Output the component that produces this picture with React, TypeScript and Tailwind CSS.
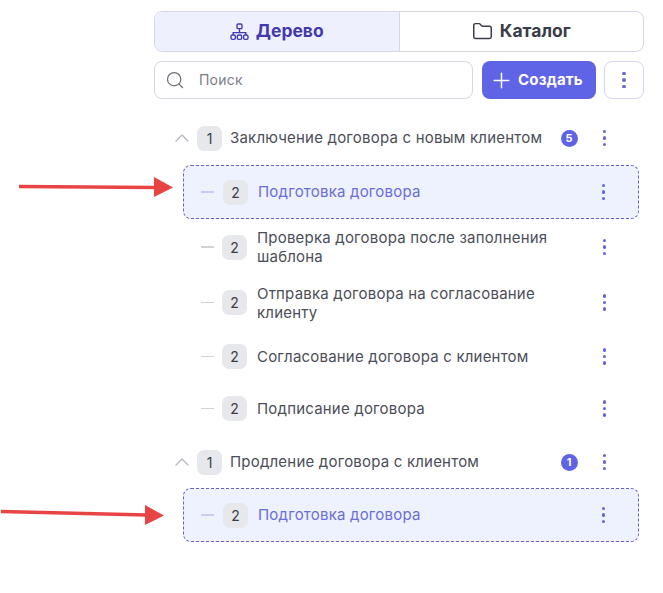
import { ChevronUp, Folder, Plus, Search } from 'lucide-react';

function TreeIcon() {
	return (
		<svg width="19" height="18" viewBox="0 0 19 18" fill="none" stroke="currentColor" strokeWidth="1.4">
			<rect x="7" y="1" width="5" height="4.6" rx="1.2" />
			<path d="M9.5 5.6V10M3.2 12V9.6H15.8V12" />
			<rect x="1" y="12" width="4.4" height="4.4" rx="1.4" />
			<rect x="7.3" y="12" width="4.4" height="4.4" rx="1.4" />
			<rect x="13.6" y="12" width="4.4" height="4.4" rx="1.4" />
		</svg>
	);
}

function Kebab({ className }: { className: string }) {
	return (
		<div className={`flex flex-col items-center gap-[3px] ${className}`}>
			<span className="w-[3.5px] h-[3.5px] rounded-full bg-[#6366d8]" />
			<span className="w-[3.5px] h-[3.5px] rounded-full bg-[#6366d8]" />
			<span className="w-[3.5px] h-[3.5px] rounded-full bg-[#6366d8]" />
		</div>
	);
}

function Badge({ n }: { n: number }) {
	return (
		<div className="w-[25px] h-[25px] shrink-0 rounded-[7px] bg-[#e7e8ec] flex items-center justify-center text-[14px] text-[#3a3d48]">
			{n}
		</div>
	);
}

function GroupRow({ title, count }: { title: string; count: number }) {
	return (
		<div className="h-[30px] flex items-center">
			<ChevronUp className="w-[24px] h-[24px] ml-[16px] mr-[3px] text-[#b4b6bd]" strokeWidth={1.2} />
			<Badge n={1} />
			<span className="ml-[8px] text-[15px] tracking-[0.2px] text-[#4b4e58] whitespace-nowrap">{title}</span>
			<div className="ml-auto w-[17px] h-[17px] mr-[25px] rounded-full bg-[#5f63e6] text-white text-[11px] font-bold flex items-center justify-center">
				{count}
			</div>
			<Kebab className="mr-[38px]" />
		</div>
	);
}

function ChildRow({ title, h }: { title: string; h: string }) {
	return (
		<div className={`${h} flex items-center`}>
			<div className="w-[13px] h-[1.5px] ml-[47px] mr-[8px] bg-[#d0d2d6]" />
			<Badge n={2} />
			<span className="ml-[10px] w-[310px] text-[15px] tracking-[0.2px] leading-[19px] text-[#4b4e58]">{title}</span>
			<Kebab className="ml-auto mr-[38px]" />
		</div>
	);
}

function SelectedRow() {
	return (
		<div className="h-[54px] ml-[29px] mr-[5px] flex items-center rounded-[8px] border border-dashed border-[#6a5fc9] bg-[#eef1fe]">
			<div className="w-[13px] h-[1.5px] ml-[17px] mr-[9px] bg-[#c9cdf2]" />
			<Badge n={2} />
			<span className="ml-[10px] text-[15px] tracking-[0.2px] text-[#6a6ed8]">Подготовка договора</span>
			<Kebab className="ml-auto mr-[33px]" />
		</div>
	);
}

export default function App() {
	return (
		<div className="relative w-[663px] h-[593px] bg-white pl-[154px] pr-[19px] pt-[11px] font-['Inter',sans-serif] overflow-hidden">
			<div className="flex h-[41px] rounded-[8px] border border-[#d5d7e2] overflow-hidden">
				<div className="flex-1 flex items-center justify-center gap-[7px] bg-[#eef1fd] border-r border-[#d5d7e2] text-[#4338b0] text-[17.5px] font-bold">
					<TreeIcon />
					Дерево
				</div>
				<div className="flex-1 flex items-center justify-center gap-[7px] text-[#3a3d48] text-[17.5px] font-bold">
					<Folder className="w-[21px] h-[21px]" strokeWidth={1.7} />
					Каталог
				</div>
			</div>

			<div className="flex mt-[9px] h-[38px]">
				<div className="w-[319px] flex items-center rounded-[8px] border border-[#d5d7e2] bg-white">
					<Search className="w-[20px] h-[20px] ml-[10px] text-[#6d7078]" strokeWidth={1.5} />
					<span className="ml-[14px] -mt-[1px] text-[14px] tracking-[0.2px] text-[#7a7d85]">Поиск</span>
				</div>
				<div className="ml-[9px] w-[114px] pl-[7px] flex items-center gap-[4px] rounded-[8px] bg-[#5f63e6] text-white text-[15px] tracking-[0.2px] font-bold">
					<Plus className="w-[25px] h-[25px]" strokeWidth={1.4} />
					Создать
				</div>
				<div className="ml-[8px] w-[40px] flex items-center justify-center rounded-[8px] border border-[#d5d7f0]">
					<Kebab className="" />
				</div>
			</div>

			<div className="mt-[24px]">
				<GroupRow title="Заключение договора с новым клиентом" count={5} />
				<div className="mt-[12px]">
					<SelectedRow />
				</div>
				<ChildRow h="h-[56px]" title="Проверка договора после заполнения шаблона" />
				<ChildRow h="h-[55px]" title="Отправка договора на согласование клиенту" />
				<ChildRow h="h-[53px]" title="Согласование договора с клиентом" />
				<ChildRow h="h-[51px]" title="Подписание договора" />
				<div className="mt-[13px]">
					<GroupRow title="Продление договора с клиентом" count={1} />
				</div>
				<div className="mt-[11px]">
					<SelectedRow />
				</div>
			</div>

			{/* red annotation arrows */}
			<svg className="absolute left-0 top-0 pointer-events-none" width="663" height="593">
				<path d="M19 186.5 L156 187.5" stroke="#e94444" strokeWidth="3.5" />
				<path d="M154 177 L173 187.5 L154 197 Z" fill="#e94444" />
				<path d="M1 511.5 L147 515" stroke="#e94444" strokeWidth="3.5" />
				<path d="M145 505 L164 515.5 L145 525 Z" fill="#e94444" />
			</svg>
		</div>
	);
}
